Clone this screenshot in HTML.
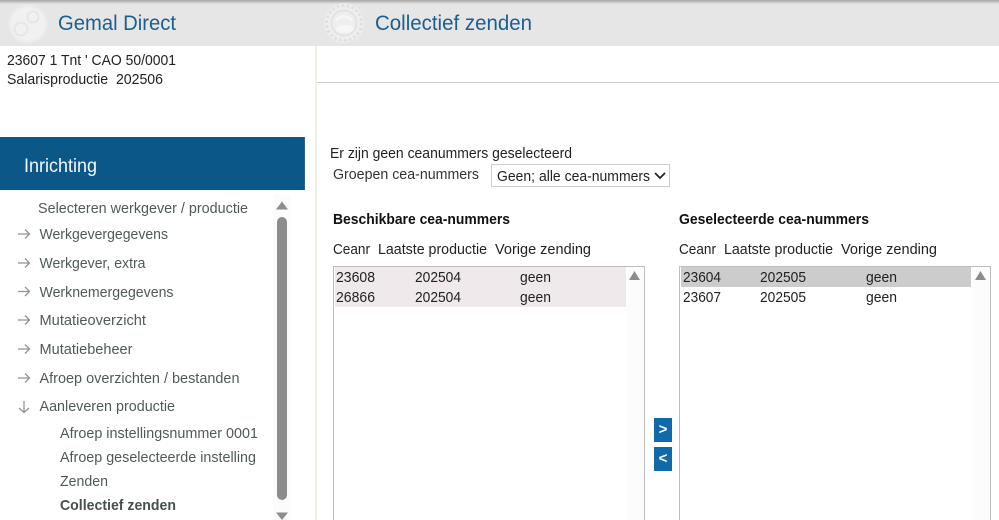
<!DOCTYPE html>
<html lang="nl"><head><meta charset="utf-8"><title>Collectief zenden</title>
<style>
html,body{margin:0;padding:0;background:#fff;width:999px;height:520px;overflow:hidden}
svg{display:block}
text{font-family:"Liberation Sans",sans-serif;font-size:15px;fill:#222;white-space:pre}
.m{fill:#4f5a58}
.h{font-size:21px;fill:#1c5f8c}
.b{font-weight:bold;fill:#111}
</style></head><body>
<svg width="999" height="520" viewBox="0 0 999 520" xmlns="http://www.w3.org/2000/svg">
<defs><linearGradient id="t" x1="0" y1="0" x2="0" y2="1"><stop offset="0" stop-color="#a5a5a5"/><stop offset="1" stop-color="#e4e4e4"/></linearGradient>
<radialGradient id="lg"><stop offset=".8" stop-color="#f1f1f1"/><stop offset="1" stop-color="#e8e8e8"/></radialGradient></defs>
<rect width="999" height="46" fill="#e6e6e6"/>
<rect width="999" height="4" fill="url(#t)"/>
<!-- logo left -->
<circle cx="28" cy="24" r="20" fill="url(#lg)"/>
<circle cx="33" cy="17" r="5.500" fill="none" stroke="#e6e6e6" stroke-width="2"/>
<circle cx="21" cy="29" r="6.500" fill="none" stroke="#e6e6e6" stroke-width="2"/>
<!-- logo right -->
<circle cx="344" cy="23" r="20" fill="#eeeeee"/>
<circle cx="344" cy="23" r="17.500" fill="none" stroke="#e0e0e0" stroke-width="3" stroke-dasharray="2.500 2.500"/>
<circle cx="344" cy="23" r="12.500" fill="none" stroke="#e0e0e0" stroke-width="1.500"/>
<ellipse cx="345" cy="29" rx="9" ry="4" fill="#f6f6f6"/>
<path d="M336 20q8-7 16 0" fill="none" stroke="#f6f6f6" stroke-width="3"/>
<text x="58" y="30" class="h" textLength="118" lengthAdjust="spacingAndGlyphs">Gemal Direct</text>
<text x="375" y="30" class="h" textLength="157" lengthAdjust="spacingAndGlyphs">Collectief zenden</text>

<!-- sidebar divider -->
<rect x="315" y="46" width="2" height="474" fill="#f1eee6"/>
<rect x="317" y="82" width="682" height="1" fill="#cfcfcf"/>

<text x="7" y="65" textLength="169" lengthAdjust="spacingAndGlyphs">23607 1 Tnt ' CAO 50/0001</text>
<text x="7" y="84" textLength="156" lengthAdjust="spacingAndGlyphs">Salarisproductie  202506</text>

<rect x="0" y="137" width="305" height="53" fill="#0b5787"/>
<rect x="304" y="137" width="1" height="53" fill="#33617f"/>
<text x="24" y="172" style="font-size:19px;fill:#f4f8fb" textLength="73" lengthAdjust="spacingAndGlyphs">Inrichting</text>

<!-- menu -->
<text x="38" y="213" class="m" textLength="210" lengthAdjust="spacingAndGlyphs">Selecteren werkgever / productie</text>
<text x="39.500" y="239" class="m" textLength="128.500" lengthAdjust="spacingAndGlyphs">Werkgevergegevens</text>
<text x="39.500" y="268" class="m" textLength="106" lengthAdjust="spacingAndGlyphs">Werkgever, extra</text>
<text x="39.500" y="297" class="m" textLength="134" lengthAdjust="spacingAndGlyphs">Werknemergegevens</text>
<text x="39.500" y="325" class="m" textLength="106.500" lengthAdjust="spacingAndGlyphs">Mutatieoverzicht</text>
<text x="39.500" y="354" class="m" textLength="93" lengthAdjust="spacingAndGlyphs">Mutatiebeheer</text>
<text x="39.500" y="383" class="m" textLength="200" lengthAdjust="spacingAndGlyphs">Afroep overzichten / bestanden</text>
<text x="39.500" y="411" class="m" textLength="135.500" lengthAdjust="spacingAndGlyphs">Aanleveren productie</text>
<text x="60" y="438" class="m" textLength="198" lengthAdjust="spacingAndGlyphs">Afroep instellingsnummer 0001</text>
<text x="60" y="462" class="m" textLength="196" lengthAdjust="spacingAndGlyphs">Afroep geselecteerde instelling</text>
<text x="60" y="486" class="m" textLength="48" lengthAdjust="spacingAndGlyphs">Zenden</text>
<text x="60" y="510" class="m" style="font-weight:bold;fill:#46504f" textLength="116" lengthAdjust="spacingAndGlyphs">Collectief zenden</text>

<!-- menu arrows -->
<g fill="none" stroke="#8f9594" stroke-width="1.300">
<path d="M18 234H29M25 229.500L29.500 234L25 238.500"/>
<path d="M18 263H29M25 258.500L29.500 263L25 267.500"/>
<path d="M18 291.500H29M25 287L29.500 291.500L25 296"/>
<path d="M18 320H29M25 315.500L29.500 320L25 324.500"/>
<path d="M18 349H29M25 344.500L29.500 349L25 353.500"/>
<path d="M18 378H29M25 373.500L29.500 378L25 382.500"/>
<path d="M24 401V412.500M19 408L24 412.500L29 408"/>
</g>

<!-- sidebar scrollbar -->
<rect x="273" y="195" width="18" height="325" fill="#fbfbfb"/>
<path d="M276 209.500L282 201.500L288 209.500Z" fill="#8c8c8c"/>
<rect x="277" y="217" width="10" height="283" rx="5" fill="#8c8c8c"/>
<path d="M276 512.500L282 520L288 512.500Z" fill="#8c8c8c"/>

<!-- main -->
<text x="330" y="158" textLength="242" lengthAdjust="spacingAndGlyphs">Er zijn geen ceanummers geselecteerd</text>
<text x="333" y="179" style="fill:#333" textLength="146" lengthAdjust="spacingAndGlyphs">Groepen cea-nummers</text>
<rect x="491.500" y="164.500" width="178" height="22" fill="#fff" stroke="#cdcdcd"/>
<text x="497" y="181" textLength="153" lengthAdjust="spacingAndGlyphs">Geen; alle cea-nummers</text>
<path d="M655 173L660 178L665 173" fill="none" stroke="#222" stroke-width="1.700"/>

<text x="333" y="224" class="b" textLength="177" lengthAdjust="spacingAndGlyphs">Beschikbare cea-nummers</text>
<text x="333" y="254" textLength="37" lengthAdjust="spacingAndGlyphs">Ceanr</text>
<text x="378" y="254" textLength="109" lengthAdjust="spacingAndGlyphs">Laatste productie</text>
<text x="495" y="254" textLength="96" lengthAdjust="spacingAndGlyphs">Vorige zending</text>

<path d="M333.500 521V266.500H644.500V521" fill="#fff" stroke="#bdbdbd"/>
<rect x="627" y="267" width="17" height="253" fill="#fcfcfc"/>
<rect x="335" y="267" width="291" height="40" fill="#efe9ec"/>
<path d="M629 280L634.500 271L640 280Z" fill="#8c8c8c"/>
<text x="336" y="282" textLength="39" lengthAdjust="spacingAndGlyphs">23608</text>
<text x="415" y="282" textLength="46" lengthAdjust="spacingAndGlyphs">202504</text>
<text x="520" y="282" textLength="31" lengthAdjust="spacingAndGlyphs">geen</text>
<text x="336" y="302" textLength="39" lengthAdjust="spacingAndGlyphs">26866</text>
<text x="415" y="302" textLength="46" lengthAdjust="spacingAndGlyphs">202504</text>
<text x="520" y="302" textLength="31" lengthAdjust="spacingAndGlyphs">geen</text>

<text x="679" y="224" class="b" textLength="190" lengthAdjust="spacingAndGlyphs">Geselecteerde cea-nummers</text>
<text x="679" y="254" textLength="37" lengthAdjust="spacingAndGlyphs">Ceanr</text>
<text x="724" y="254" textLength="109" lengthAdjust="spacingAndGlyphs">Laatste productie</text>
<text x="841" y="254" textLength="96" lengthAdjust="spacingAndGlyphs">Vorige zending</text>

<path d="M679.500 521V266.500H990.500V521" fill="#fff" stroke="#bdbdbd"/>
<rect x="972" y="267" width="18" height="253" fill="#fcfcfc"/>
<rect x="681" y="267" width="290" height="20" fill="#cccccc"/>
<path d="M975 280L980.500 271L986 280Z" fill="#8c8c8c"/>
<text x="683" y="282" textLength="38" lengthAdjust="spacingAndGlyphs">23604</text>
<text x="760" y="282" textLength="46" lengthAdjust="spacingAndGlyphs">202505</text>
<text x="866" y="282" textLength="31" lengthAdjust="spacingAndGlyphs">geen</text>
<text x="683" y="302" textLength="38" lengthAdjust="spacingAndGlyphs">23607</text>
<text x="760" y="302" textLength="46" lengthAdjust="spacingAndGlyphs">202505</text>
<text x="866" y="302" textLength="31" lengthAdjust="spacingAndGlyphs">geen</text>

<!-- transfer buttons -->
<rect x="654" y="418" width="18" height="24" fill="#1069a8"/>
<rect x="654" y="447" width="18" height="24" fill="#1069a8"/>
<text x="663" y="434" text-anchor="middle" style="font-size:15px;font-weight:bold;fill:#fff">&gt;</text>
<text x="663" y="463" text-anchor="middle" style="font-size:15px;font-weight:bold;fill:#fff">&lt;</text>
</svg>
</body></html>
